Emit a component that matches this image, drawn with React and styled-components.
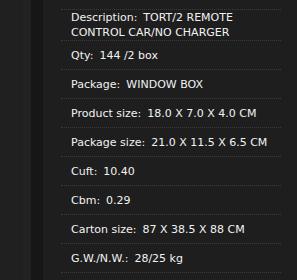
import React from "react";
import styled, { createGlobalStyle } from "styled-components";

const GlobalStyle = createGlobalStyle`
  html, body {
    margin: 0;
    padding: 0;
    background: #202020;
    overflow: hidden;
  }
  body {
    font-family: "DejaVu Sans", Verdana, sans-serif;
  }
`;

const Page = styled.div`
  display: flex;
  height: 280px;
  overflow: hidden;
  background: #202020;
`;

const Gutter = styled.div`
  width: 23px;
  flex-shrink: 0;
`;

const Edge = styled.div`
  width: 8px;
  flex-shrink: 0;
  background: #222222;
`;

const Rail = styled.div`
  width: 12px;
  flex-shrink: 0;
  background: #161616;
`;

const Panel = styled.div`
  flex: 1;
  background: #1e1e1e;
  padding: 0 16px 0 18px;
`;

const SpecList = styled.ul`
  list-style: none;
  margin: -19px 0 0;
  padding: 0;
`;

const SpecRow = styled.li`
  display: flex;
  align-items: center;
  flex-wrap: wrap;
  min-height: 28px;
  padding: 0 10px;
  border-bottom: 1px dotted #3a3a3a;
  color: #f2f2f2;
  font-size: 11px;
  line-height: 15px;
`;

const SpecText = styled.span`
  display: block;
`;

const Label = styled.span`
  margin-right: 6px;
`;

const specs = [
  ["Item No.:", "12-0102148"],
  ["Description:", "TORT/2 REMOTE CONTROL CAR/NO CHARGER"],
  ["Qty:", "144 /2 box"],
  ["Package:", "WINDOW BOX"],
  ["Product size:", "18.0 X 7.0 X 4.0 CM"],
  ["Package size:", "21.0 X 11.5 X 6.5 CM"],
  ["Cuft:", "10.40"],
  ["Cbm:", "0.29"],
  ["Carton size:", "87 X 38.5 X 88 CM"],
  ["G.W./N.W.:", "28/25 kg"],
];

export default function App() {
  return (
    <>
      <GlobalStyle />
      <Page>
        <Gutter />
        <Edge />
        <Rail />
        <Panel>
          <SpecList>
            {specs.map(([label, value]) => (
              <SpecRow key={label}>
                <SpecText>
                  <Label>{label}</Label>
                  {value}
                </SpecText>
              </SpecRow>
            ))}
          </SpecList>
        </Panel>
      </Page>
    </>
  );
}
